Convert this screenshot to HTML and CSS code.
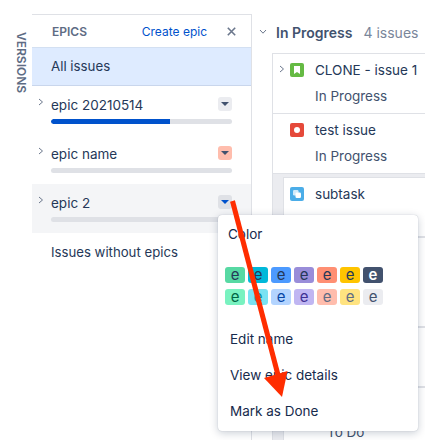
FILE: index.html
```html
<!DOCTYPE html>
<html lang="en">
<head>
<meta charset="utf-8">
<title>Backlog</title>
<link rel="stylesheet" href="styles.css">
</head>
<body>
<div class="board">
  <aside class="rail"><span class="rail-label">VERSIONS</span></aside>

  <section class="epics">
    <header class="epics-head">
      <span class="epics-title">EPICS</span>
      <a class="create">Create epic</a>
      <svg class="close" width="9" height="9" viewBox="0 0 9 9"><path d="M.8.8l7.400 7.400M8.200.8L.8 8.200" stroke="#6b778c" stroke-width="1.600" fill="none"/></svg>
    </header>
    <div class="all">All issues</div>

    <div class="epic">
      <div class="epic-top">
        <svg class="chev" width="6" height="8" viewBox="0 0 6 8"><path d="M1 1l3.500 3L1 7" stroke="#6b778c" fill="none"/></svg>
        <span class="epic-name">epic 20210514</span>
        <span class="drop"><i class="tri"></i></span>
      </div>
      <div class="bar"><div class="fill"></div></div>
    </div>

    <div class="epic">
      <div class="epic-top">
        <svg class="chev" width="6" height="8" viewBox="0 0 6 8"><path d="M1 1l3.500 3L1 7" stroke="#6b778c" fill="none"/></svg>
        <span class="epic-name">epic name</span>
        <span class="drop drop-red"><i class="tri"></i></span>
      </div>
      <div class="bar"></div>
    </div>

    <div class="epic epic-hover">
      <div class="epic-top">
        <svg class="chev" width="6" height="8" viewBox="0 0 6 8"><path d="M1 1l3.500 3L1 7" stroke="#6b778c" fill="none"/></svg>
        <span class="epic-name">epic 2</span>
        <span class="drop drop-open"><i class="tri tri-blue"></i></span>
      </div>
      <div class="bar"></div>
    </div>

    <div class="without">Issues without epics</div>
  </section>

  <main class="main">
    <div class="group-head">
      <svg class="chev-down" width="8" height="6" viewBox="0 0 8 6"><path d="M1 1l3 3.200L7 1" stroke="#6b778c" fill="none"/></svg>
      <strong class="group-title">In Progress</strong>
      <span class="count">4 issues</span>
    </div>
    <div class="cards">
      <div class="card">
        <div class="card-line">
          <svg class="chev-card" width="6" height="8" viewBox="0 0 6 8"><path d="M1 1l3.500 3L1 7" stroke="#6b778c" fill="none"/></svg>
          <svg class="type" width="14" height="14" viewBox="0 0 14 14"><rect width="14" height="14" rx="2" fill="#65ba43"/><path d="M4 3h6v8L7 9l-3 2z" fill="#fff"/></svg>
          <span class="card-title">CLONE - issue 1</span>
        </div>
        <div class="status">In Progress</div>
      </div>
      <div class="card">
        <div class="card-line">
          <svg class="type" width="14" height="14" viewBox="0 0 14 14"><rect width="14" height="14" rx="2" fill="#e5493a"/><circle cx="7" cy="7" r="3" fill="#fff"/></svg>
          <span class="card-title">test issue</span>
        </div>
        <div class="status">In Progress</div>
      </div>
      <div class="subtasks">
        <div class="card card-sub">
          <div class="card-line">
            <svg class="type" width="14" height="14" viewBox="0 0 14 14"><rect width="14" height="14" rx="2" fill="#4bade8"/><rect x="3" y="3" width="5.500" height="5.500" rx="1.200" fill="#fff" opacity=".75"/><rect x="5.500" y="5.500" width="5.500" height="5.500" rx="1.200" fill="#fff"/></svg>
            <span class="card-title">subtask</span>
          </div>
          <div class="status status-sub">In Progress</div>
        </div>
        <div class="card card-sub card-tall"></div>
        <div class="card card-sub"></div>
        <div class="card card-sub card-last"><div class="status status-last">To Do</div></div>
      </div>
    </div>
  </main>
</div>

<div class="menu">
  <div class="menu-label">Color</div>
  <div class="swatches">
    <span class="sw s1">e</span><span class="sw s2">e</span><span class="sw s3">e</span><span class="sw s4">e</span><span class="sw s5">e</span><span class="sw s6">e</span><span class="sw s7">e</span>
    <span class="sw t1">e</span><span class="sw t2">e</span><span class="sw t3">e</span><span class="sw t4">e</span><span class="sw t5">e</span><span class="sw t6">e</span><span class="sw t7">e</span>
  </div>
  <div class="menu-item">Edit name</div>
  <div class="menu-item">View epic details</div>
  <div class="menu-item">Mark as Done</div>
</div>

<svg class="arrow" width="425" height="440" viewBox="0 0 425 440">
  <path d="M232.500 201L278 375" stroke="#ff2d00" stroke-width="5" fill="none"/>
  <path d="M264 378L287.500 371L282 397z" fill="#ff2d00"/>
</svg>
</body>
</html>
```
FILE: styles.css
```css
* { box-sizing: border-box; }
html, body { margin: 0; height: 440px; overflow: hidden; background: #fff; }
body {
  font-family: Inter, "Liberation Sans", sans-serif;
  font-size: 14px;
  color: #253858;
  position: relative;
}
.board { display: flex; height: 440px; padding-top: 14px; }

.rail { width: 32px; flex: none; display: flex; justify-content: flex-end; padding: 18px 5px 0 0; }
.rail-label {
  writing-mode: vertical-rl;
  font-size: 12px;
  font-weight: 600;
  line-height: 12px;
  color: #5e6c84;
  height: 62px;
}

.epics { width: 220px; flex: none; border-top: 1px solid #dfe1e6; border-right: 1px solid #dfe1e6; }
.epics-head { height: 32px; display: flex; align-items: center; padding: 0 15px 0 20px; }
.epics-title { font-size: 12px; font-weight: 600; color: #5e6c84; }
.create { margin-left: auto; font-size: 12px; color: #0052cc; }
.close { margin-left: 20px; }
.all {
  height: 39px;
  display: flex;
  align-items: center;
  padding: 0 0 2px 19px;
  font-size: 13.3px;
  background: #deebff;
  border-top: 1px solid #d3e0f2;
  border-bottom: 1px solid #c9d6ec;
}
.epic { height: 49px; padding: 10px 19px 0 19px; }
.epic-hover { background: #f4f5f7; }
.epic-top { display: flex; align-items: center; height: 14px; position: relative; margin-top: 1px; }
.chev { position: absolute; left: -13px; top: 1px; }
.epic-name { font-size: 13.5px; line-height: 14px; padding-top: 2px; }
.drop {
  margin-left: auto;
  width: 14px;
  height: 14px;
  border-radius: 3px;
  background: #ebecf0;
  display: flex;
  align-items: center;
  justify-content: center;
}
.drop-red { background: #ffbdad; }
.drop-open { background: #dfe1e6; }
.tri { width: 0; height: 0; border: 4px solid transparent; border-top: 4px solid #42526e; border-bottom: 0; }
.tri-blue { border-top-color: #0052cc; }
.bar { height: 5px; margin-top: 8px; border-radius: 3px; background: #dfe1e6; overflow: hidden; }
.fill { width: 119px; height: 5px; background: #0052cc; border-radius: 3px 0 0 3px; }
.without { padding: 11px 0 0 19px; font-size: 13.2px; line-height: 16px; }

.main { flex: 1; min-width: 0; padding: 0 0 0 20px; }
.group-head { height: 39px; display: flex; align-items: center; position: relative; padding: 0 0 2px 4px; }
.chev-down { position: absolute; left: -13px; top: 15px; }
.group-title { font-size: 14px; font-weight: 600; color: #42526e; }
.count { margin-left: 11px; font-size: 14px; color: #7a869a; }
.cards { border-left: 1px solid #dfe1e6; border-top: 1px solid #dfe1e6; }
.card { height: 60px; padding: 9px 0 0 17px; border-bottom: 1px solid #dfe1e6; background: #fff; }
.card-line { display: flex; align-items: center; height: 14px; position: relative; }
.chev-card { position: absolute; left: -11px; top: 2px; }
.type { flex: none; }
.card-title { margin-left: 11px; font-size: 13.5px; white-space: nowrap; }
.status { margin: 11px 0 0 25px; font-size: 13.5px; line-height: 16px; color: #42526e; }
.subtasks { background: #ebecf0; padding: 3px 0 0 10px; }
.card-sub { border-left: 1px solid #dfe1e6; border-top: 1px solid #dfe1e6; padding-left: 6px; }
.card-tall { height: 90px; }
.card-last { height: 70px; }
.status-sub { margin: 12px 0 0 37px; }
.status-last { margin: 27px 0 0 37px; }

.menu {
  position: absolute;
  left: 218px;
  top: 215px;
  width: 200px;
  height: 216px;
  background: #fff;
  border-radius: 4px;
  box-shadow: 0 2px 8px rgba(9, 30, 66, .22), 0 0 1px rgba(9, 30, 66, .3);
  padding-top: 11px;
  font-size: 13.5px;
  color: #172b4d;
}
.menu-label { padding-left: 10px; line-height: 16px; }
.swatches {
  display: grid;
  grid-template-columns: repeat(7, 20px);
  grid-auto-rows: 16px;
  column-gap: 3px;
  row-gap: 6px;
  margin: 25px 0 0 7px;
}
.sw { border-radius: 3px; text-align: center; font-size: 15px; line-height: 16px; }
.s1 { background: #57d9a3; color: #253858; }
.s2 { background: #00b8d9; color: #253858; }
.s3 { background: #4c9aff; color: #253858; }
.s4 { background: #998dd9; color: #253858; }
.s5 { background: #ff8f73; color: #253858; }
.s6 { background: #ffc400; color: #253858; }
.s7 { background: #42526e; color: #fff; font-weight: 600; }
.t1 { background: #79f2c0; color: #006644; }
.t2 { background: #79e2f2; color: #008da6; }
.t3 { background: #b3d4ff; color: #0747a6; }
.t4 { background: #c0b6f2; color: #403294; }
.t5 { background: #ffbdad; color: #5e6c84; }
.t6 { background: #ffe380; color: #5e6c84; }
.t7 { background: #ebecf0; color: #42526e; }
.swatches + .menu-item { margin-top: 16px; }
.menu-item { height: 36px; display: flex; align-items: center; padding-left: 12px; font-size: 13.5px; }

.arrow { position: absolute; left: 0; top: 0; pointer-events: none; }
```
